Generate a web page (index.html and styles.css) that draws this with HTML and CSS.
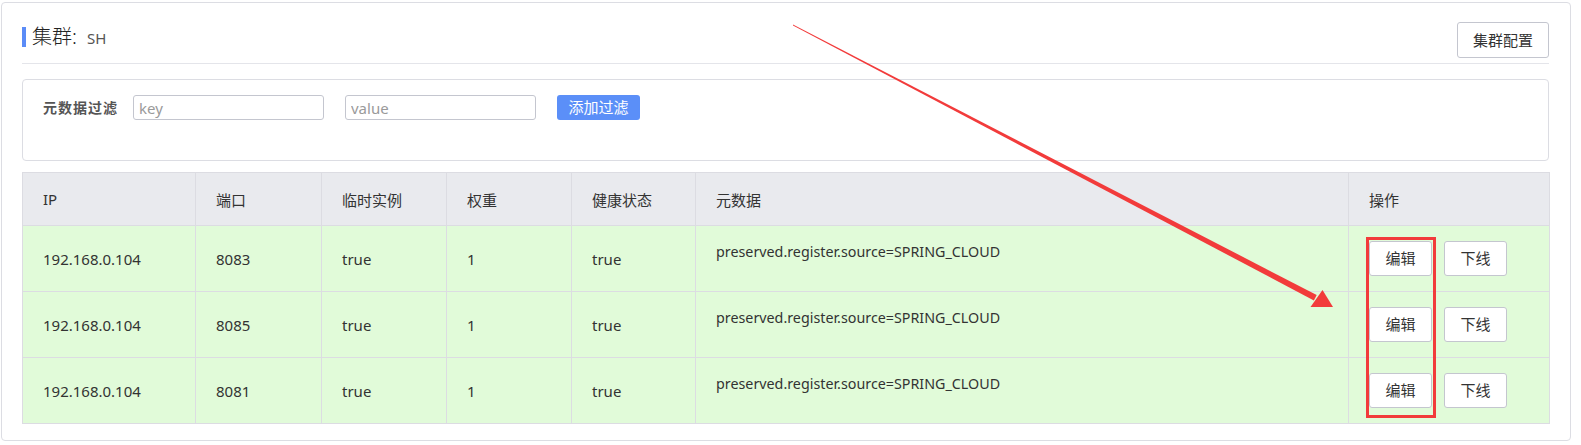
FILE: index.html
```html
<!DOCTYPE html>
<html lang="zh-CN">
<head>
<meta charset="utf-8">
<title>集群</title>
<link rel="stylesheet" href="styles.css">
</head>
<body>
<div class="card">
  <div class="card-head">
    <div class="title"><span class="title-bar"></span><span class="title-main">集群:</span><span class="title-sub">SH</span></div>
    <button class="btn">集群配置</button>
  </div>
  <div class="filter">
    <span class="filter-label">元数据过滤</span>
    <input class="input" placeholder="key">
    <input class="input" placeholder="value">
    <button class="btn-primary">添加过滤</button>
  </div>
  <table class="grid">
    <colgroup>
      <col class="c-ip"><col class="c-port"><col class="c-eph"><col class="c-w"><col class="c-h"><col class="c-meta"><col class="c-op">
    </colgroup>
    <thead>
      <tr><th>IP</th><th>端口</th><th>临时实例</th><th>权重</th><th>健康状态</th><th>元数据</th><th>操作</th></tr>
    </thead>
    <tbody>
      <tr><td>192.168.0.104</td><td>8083</td><td>true</td><td>1</td><td>true</td><td class="meta">preserved.register.source=SPRING_CLOUD</td><td><div class="ops"><button class="btn btn-sm">编辑</button><button class="btn btn-sm">下线</button></div></td></tr>
      <tr><td>192.168.0.104</td><td>8085</td><td>true</td><td>1</td><td>true</td><td class="meta">preserved.register.source=SPRING_CLOUD</td><td><div class="ops"><button class="btn btn-sm">编辑</button><button class="btn btn-sm">下线</button></div></td></tr>
      <tr><td>192.168.0.104</td><td>8081</td><td>true</td><td>1</td><td>true</td><td class="meta">preserved.register.source=SPRING_CLOUD</td><td><div class="ops"><button class="btn btn-sm">编辑</button><button class="btn btn-sm">下线</button></div></td></tr>
    </tbody>
  </table>
</div>
<svg class="annot" width="1581" height="445" viewBox="0 0 1581 445">
  <polygon points="793,24.5 1316.7,295 1313.9,300.4 793,25.5" fill="#f23b3b"/>
  <polygon points="1333,307 1310.5,307 1322.5,290" fill="#f23b3b"/>
  <rect x="1367.5" y="238.5" width="67" height="178" fill="none" stroke="#f23b3b" stroke-width="3"/>
</svg>
</body>
</html>
```
FILE: styles.css
```css
* { box-sizing: border-box; }
html, body { margin: 0; padding: 0; background: #fff; }
body {
  font-family: "Noto Sans", "Noto Sans CJK SC", sans-serif;
  color: #333;
  font-size: 15px;
  position: relative;
  width: 1581px;
  height: 445px;
  overflow: hidden;
}
.card {
  margin: 2px 0 0 1px;
  width: 1570px;
  height: 439px;
  border: 1px solid #dcdde3;
  border-radius: 4px;
  padding: 19px 20px 0 20px;
}
.card-head {
  display: flex;
  justify-content: space-between;
  align-items: flex-start;
  padding-bottom: 5px;
  border-bottom: 1px solid #e4e5ea;
  width: 1527px;
}
.title {
  display: flex;
  align-items: center;
  height: 30px;
}
.title-bar {
  display: inline-block;
  width: 4px;
  height: 20px;
  background: #5b8cf7;
  margin: 0 6px 0 0;
}
.title-main {
  font-size: 20px;
  font-weight: 300;
  color: #222;
  line-height: 20px;
}
.title-sub {
  font-size: 15px;
  color: #555;
  margin: 2px 0 0 10px;
  line-height: 20px;
}
.btn {
  font-family: inherit;
  font-size: 15px;
  color: #333;
  background: #fff;
  border: 1px solid #c4c6cf;
  border-radius: 3px;
  height: 36px;
  width: 92px;
  padding: 0;
  line-height: 1;
}
.filter {
  margin-top: 15px;
  width: 1527px;
  height: 82px;
  border: 1px solid #dcdde3;
  border-radius: 4px;
  padding: 15px 0 0 20px;
  display: flex;
  align-items: flex-start;
}
.filter-label {
  font-weight: bold;
  color: #555;
  font-size: 14px;
  line-height: 25px;
  width: 90px;
  letter-spacing: 1px;
}
.input {
  width: 191px;
  height: 25px;
  border: 1px solid #c4c6cf;
  border-radius: 3px;
  padding: 0 5px;
  font-family: inherit;
  font-size: 15px;
  color: #333;
  margin-right: 21px;
  outline: none;
}
.input::placeholder { color: #9a9a9a; }
.btn-primary {
  width: 83px;
  height: 25px;
  border: none;
  border-radius: 3px;
  background: #5b8ff8;
  color: #fff;
  font-family: inherit;
  font-size: 15px;
  padding: 0;
  line-height: 1;
}
.grid {
  margin-top: 11px;
  width: 1527px;
  border-collapse: collapse;
  table-layout: fixed;
}
.c-ip { width: 173px; }
.c-port { width: 126px; }
.c-eph { width: 125px; }
.c-w { width: 125px; }
.c-h { width: 124px; }
.c-meta { width: 653px; }
.c-op { width: 201px; }
.grid th, .grid td {
  border: 1px solid #dcdce2;
  text-align: left;
  padding: 0 0 0 20px;
  font-weight: normal;
  white-space: nowrap;
}
.grid th {
  background: #e9eaee;
  height: 53px;
  color: #333;
}
.grid td {
  background: #e1fbd9;
  height: 66px;
}
.grid td.meta {
  vertical-align: top;
  padding-top: 16px;
  font-size: 14.3px;
}
.ops {
  display: flex;
  gap: 12px;
}
.btn-sm {
  width: 63px;
  height: 35px;
}
.annot {
  position: absolute;
  left: 0;
  top: 0;
  pointer-events: none;
}
```
